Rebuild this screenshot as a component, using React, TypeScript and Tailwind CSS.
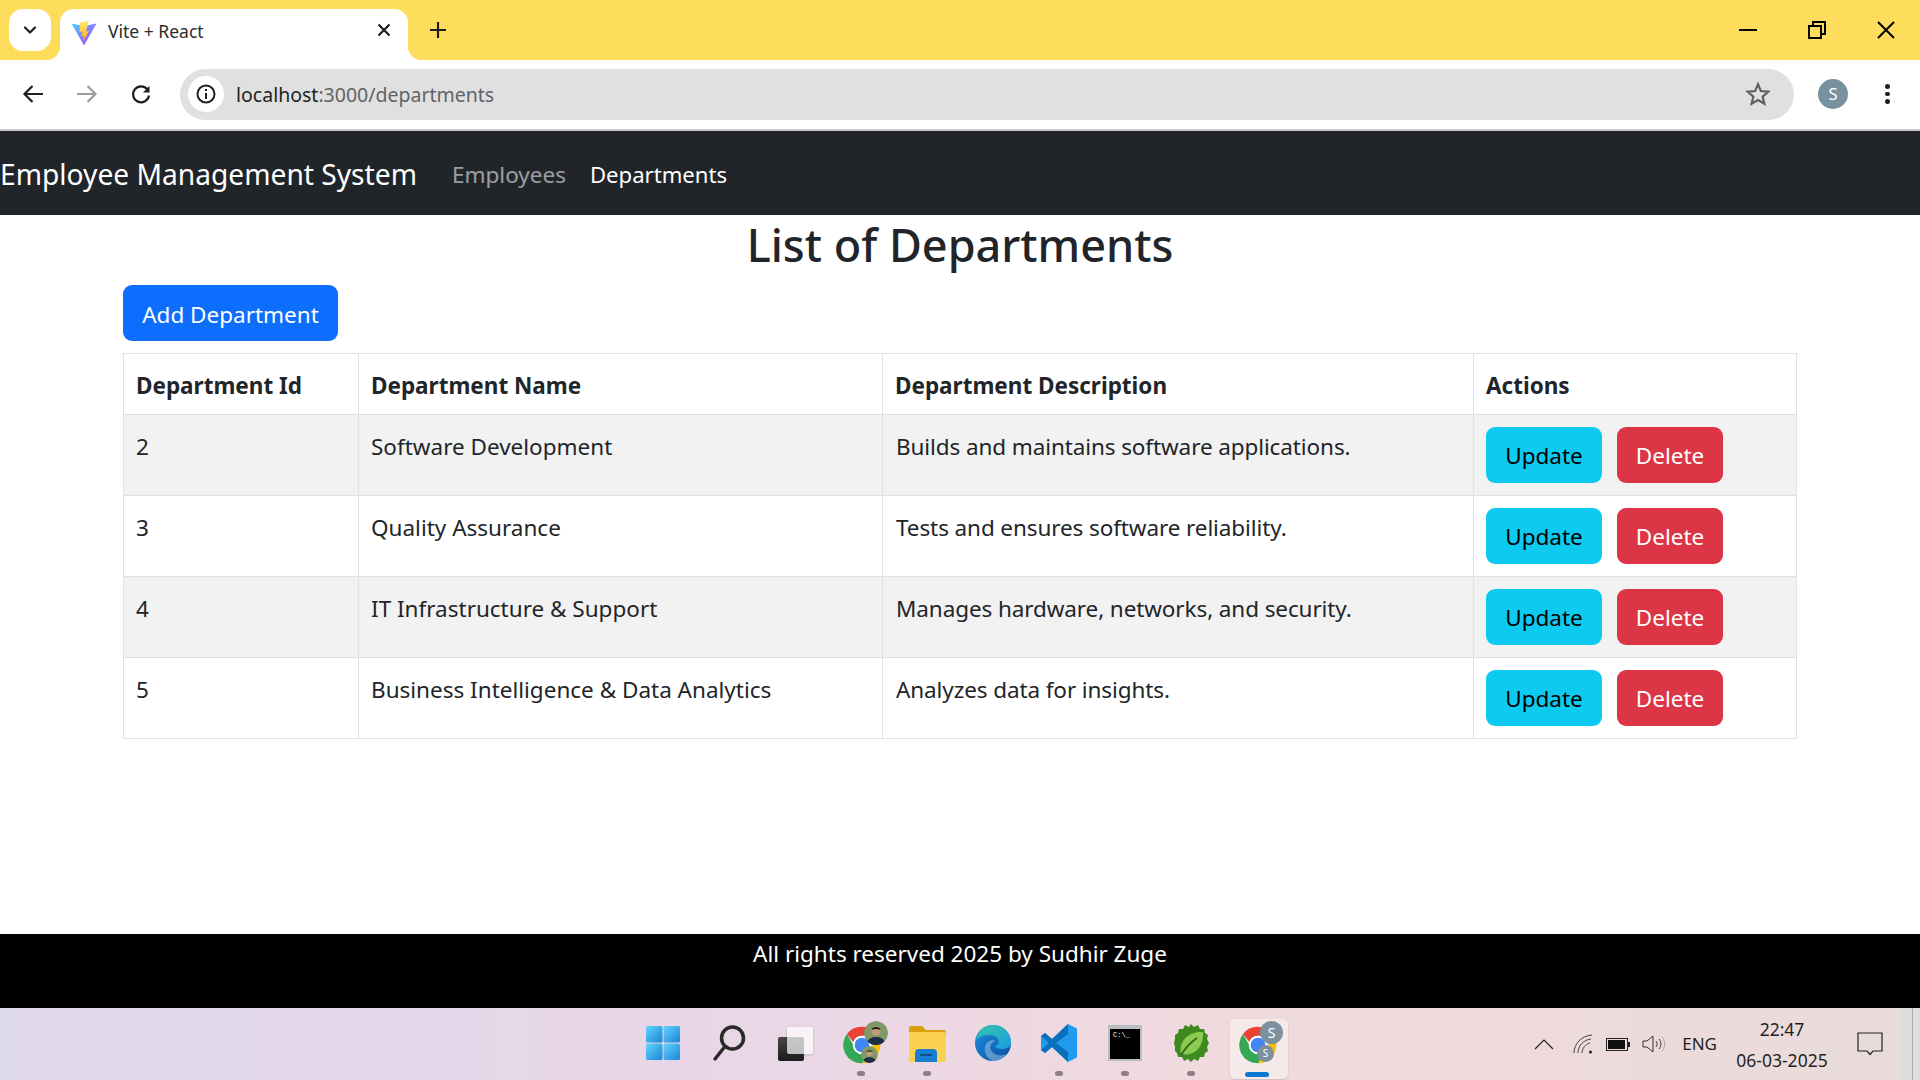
import React from "react";

const F = "font-['Noto_Sans','Open_Sans',sans-serif]";

function ChromeIcon() {
  return (
    <svg width="44" height="44" viewBox="0 0 48 48" className="absolute left-[-1px] top-0">
      <path d="M24 4a20 20 0 0 1 17.3 10H24a10 10 0 0 0-9.4 6.6L7.5 12A20 20 0 0 1 24 4z" fill="#ea4335" />
      <path d="M41.3 14A20 20 0 0 1 24 44l8.6-15a10 10 0 0 0 0-15z" fill="#fbbc04" />
      <path d="M24 44A20 20 0 0 1 7.5 12l8.6 15A10 10 0 0 0 32.6 29z" fill="#34a853" />
      <circle cx="24" cy="24" r="10" fill="#fff" />
      <circle cx="24" cy="24" r="8" fill="#4285f4" />
    </svg>
  );
}

function Person({ s }: { s: number }) {
  return (
    <svg width={s} height={s} viewBox="0 0 24 24" className="block">
      <circle cx="12" cy="12" r="12" fill="#7f9a68" />
      <path d="M3 24c0-6 4-8 9-8s9 2 9 8z" fill="#1c2d45" />
      <circle cx="12" cy="10" r="4.5" fill="#c49a7c" />
      <path d="M7.5 9c0-4 9-4 9 0-2-1.500-7-1.500-9 0z" fill="#1e1a16" />
    </svg>
  );
}

function Slot({ active, dot, children }: { active?: boolean; dot?: boolean; children: React.ReactNode }) {
  return (
    <div className="relative flex h-[72px] w-[66px] items-center justify-center">
      {active && <div className="absolute left-[6px] top-[11px] h-[60px] w-[58px] rounded-[5px] bg-[#f5e9ea] shadow-[0_1px_2px_rgba(0,0,0,0.15)]" />}
      <div className="relative mt-[-3px] flex h-10 w-10 items-center justify-center">{children}</div>
      {dot && <div className="absolute bottom-[4px] left-[29px] h-[5px] w-[8px] rounded-full bg-[#8b8083]" />}
      {active && <div className="absolute bottom-[3px] left-[21px] h-[5px] w-[24px] rounded-full bg-[#0a78d4]" />}
    </div>
  );
}

function Taskbar() {
  return (
    <div className={`flex h-[72px] shrink-0 bg-[linear-gradient(90deg,#dfd9ec_0%,#e8d6e8_35%,#f0dadf_60%,#eddada_85%,#e9dcdc_100%)] ${F}`}>
      <div className="flex-1" />
      <div className="flex">
        <Slot>
          <svg width="36" height="36" viewBox="0 0 36 36">
            <defs>
              <linearGradient id="w" x1="0" y1="0" x2="1" y2="1">
                <stop offset="0" stopColor="#63d4fb" />
                <stop offset="1" stopColor="#1a86d8" />
              </linearGradient>
            </defs>
            <rect x="1" y="1" width="16.500" height="16.500" rx="1.500" fill="url(#w)" />
            <rect x="18.500" y="1" width="16.500" height="16.500" rx="1.500" fill="url(#w)" />
            <rect x="1" y="18.500" width="16.500" height="16.500" rx="1.500" fill="url(#w)" />
            <rect x="18.500" y="18.500" width="16.500" height="16.500" rx="1.500" fill="url(#w)" />
          </svg>
        </Slot>
        <Slot>
          <svg width="36" height="38" viewBox="0 0 36 38" fill="none" stroke="#2a2a2a" strokeLinecap="round">
            <circle cx="21.500" cy="14" r="11" strokeWidth="3.500" />
            <path d="M13.500 23 L4 35" strokeWidth="3.500" />
          </svg>
        </Slot>
        <Slot>
          <div className="relative h-10 w-10">
            <div className="absolute left-[3px] top-[14px] h-[24px] w-[26px] rounded-[2px] bg-[linear-gradient(#484848,#1c1c1c)]" />
            <div className="absolute left-[12px] top-[4px] h-[27px] w-[26px] rounded-[2px] bg-white/70 shadow-[0_1px_3px_rgba(0,0,0,0.2)]" />
          </div>
        </Slot>
        <Slot dot>
          <div className="relative h-10 w-10">
            <ChromeIcon />
            <div className="absolute left-[23px] top-[-2px] h-[24px] w-[24px] overflow-hidden rounded-full"><Person s={24} /></div>
            <div className="absolute left-[20px] top-[23px] h-[17px] w-[17px] overflow-hidden rounded-full"><Person s={17} /></div>
          </div>
        </Slot>
        <Slot dot>
          <svg width="38" height="40" viewBox="0 0 38 40">
            <path d="M1 5a2 2 0 0 1 2-2h11l4 4h18a2 2 0 0 1 2 2v4H1z" fill="#dba10c" />
            <path d="M1 9h35a2 2 0 0 1 2 2v26a2 2 0 0 1-2 2H1z" fill="#fdd150" />
            <path d="M7 39v-9a4 4 0 0 1 4-4h14a4 4 0 0 1 4 4v9z" fill="#1a7dd0" />
            <rect x="12" y="31" width="12" height="2" fill="#0c4f96" />
          </svg>
        </Slot>
        <Slot>
          <svg width="38" height="40" viewBox="0 0 38 40">
            <defs>
              <linearGradient id="e1" x1="0" y1="0" x2="1" y2="1">
                <stop offset="0" stopColor="#35c4a8" />
                <stop offset="1" stopColor="#1b9de2" />
              </linearGradient>
              <linearGradient id="e2" x1="0" y1="0" x2="1" y2="1">
                <stop offset="0" stopColor="#1c8fe0" />
                <stop offset="1" stopColor="#0c4f9e" />
              </linearGradient>
            </defs>
            <circle cx="19" cy="20" r="18" fill="url(#e2)" />
            <path d="M2 17C4 7 11 2 19 2c11 0 18 8 18 17 0 5-4 7-9 7-4 0-6-1-7-3 3-1 5-3 3-7-3-5-15-6-22 1z" fill="url(#e1)" />
            <path d="M19 38c-6-2-9-8-8-14 1-5 6-8 11-6-5 1-7 5-5 9 2 5 9 7 16 4-3 5-8 8-14 7z" fill="#e8f6fc" opacity="0.35" />
          </svg>
        </Slot>
        <Slot dot>
          <svg width="38" height="40" viewBox="0 0 38 40">
            <path d="M28 1l9 4.500v29L28 39 12 24 5 30l-4-3v-14l4-3 7 6z" fill="#1f9cf0" />
            <path d="M28 1L12 16 5 10l-4 3 8 7-8 7 4 3 7-6 16 15V29L16 20 28 11z" fill="#0b6fbd" />
          </svg>
        </Slot>
        <Slot dot>
          <div className="h-[36px] w-[34px] border-x-2 border-b-2 border-t-4 border-[#b9bcc0] bg-black pl-[3px] pt-[2px] font-['Liberation_Mono',monospace] text-[7px] leading-[9px] text-white">C:\_</div>
        </Slot>
        <Slot dot>
          <svg width="36" height="40" viewBox="0 0 36 40">
            <path d="M18 1l3 3 4-2 2 4 4 0 1 4 3 2-1 4 2 4-2 4 1 4-3 2-1 4-4 0-2 4-4-2-3 3-3-3-4 2-2-4-4 0-1-4-2-2 0-4-1-4 1-4 0-4 3-2 1-4 4 0 2-4 4 2z" fill="#3f8a1e" />
            <path d="M8 31C5 18 16 8 30 9c1 14-8 25-22 22z" fill="#8ccb52" />
            <path d="M8 32C13 24 18 19 24 15" stroke="#2f6b12" strokeWidth="1.800" fill="none" />
          </svg>
        </Slot>
        <Slot active>
          <div className="relative h-10 w-10">
            <ChromeIcon />
            <div className="absolute left-[23px] top-[-2px] flex h-[23px] w-[23px] items-center justify-center rounded-full bg-[#7d929e] text-[14px] text-white">S</div>
            <div className="absolute left-[20px] top-[22px] flex h-[17px] w-[17px] items-center justify-center rounded-full bg-[#7d929e] text-[10px] text-white">S</div>
          </div>
        </Slot>
      </div>
      <div className="relative flex flex-1 items-center justify-end text-[#1f1f1f]">
        <div className="flex h-full items-center">
          <svg width="20" height="12" viewBox="0 0 20 12" fill="none" stroke="#222" strokeWidth="1.200" className="mr-[19px]"><path d="M1 11 L10 2 L19 11" /></svg>
          <svg width="20" height="20" viewBox="0 0 20 20" fill="none" stroke="#444" strokeWidth="1" className="mr-[13px]">
            <path d="M1 19C1 10 8 2 19 1M5 19C5 12 10 6 18 5M9 19C9 15 12 10 17 9" />
            <circle cx="17.500" cy="18" r="1.500" fill="#222" stroke="none" />
          </svg>
          <div className="mr-[12px] flex items-center">
            <div className="h-[13px] w-[22px] border border-[#222] p-[1px]"><div className="h-full w-[17px] bg-[#111]" /></div>
            <div className="h-[5px] w-[2px] bg-[#222]" />
          </div>
          <svg width="24" height="20" viewBox="0 0 24 20" fill="none" stroke="#333" strokeWidth="1" className="mr-[16px]">
            <path d="M1 7h4l6-5v16l-6-5H1z" />
            <path d="M14 7c1.500 2 1.500 4 0 6M17 5c2.500 3 2.500 7 0 10" />
            <path d="M20 3c3.500 4 3.500 10 0 14" stroke="#aaa" />
          </svg>
          <span className="mr-[15px] text-[17px]">ENG</span>
          <div className="mr-[25px] flex w-[100px] flex-col items-center gap-[7px] text-[17.500px] leading-[24px]">
            <span>22:47</span>
            <span>06-03-2025</span>
          </div>
          <svg width="26" height="24" viewBox="0 0 26 24" fill="none" stroke="#222" strokeWidth="1.200" className="mr-[17px]">
            <path d="M1 1h24v18H16l-3 3.500L10 19H1z" />
          </svg>
          <div className="h-full w-[20px] bg-[#dedcdc]">
            <div className="ml-[12px] h-full w-[1px] bg-[#aaa]" />
          </div>
        </div>
      </div>
    </div>
  );
}

function BrowserChrome() {
  return (
    <div className={`shrink-0 ${F}`}>
      <div className="relative flex h-[60px] items-start bg-[#ffdd5c]">
        <div className="ml-[9px] mt-[9px] flex h-[42px] w-[42px] items-center justify-center rounded-[14px] bg-white">
          <svg width="14" height="10" viewBox="0 0 14 10" fill="none" stroke="#1f1f1f" strokeWidth="2.200" strokeLinecap="round" strokeLinejoin="round"><path d="M2 2.500 L7 7.500 L12 2.500" /></svg>
        </div>
        <div className="relative ml-[9px] mt-[9px] flex h-[51px] w-[348px] items-center rounded-t-[14px] bg-white pl-[11px]">
          <div className="absolute bottom-0 left-[-14px] h-[14px] w-[14px] bg-[radial-gradient(circle_at_0_0,#ffdd5c_14px,#fff_14.500px)]" />
          <div className="absolute bottom-0 right-[-14px] h-[14px] w-[14px] bg-[radial-gradient(circle_at_100%_0,#ffdd5c_14px,#fff_14.500px)]" />
          <svg width="26" height="26" viewBox="0 0 26 26" className="mb-[3px]">
            <defs>
              <linearGradient id="v1" x1="0" y1="0" x2="1" y2="1">
                <stop offset="0" stopColor="#41d1ff" />
                <stop offset="1" stopColor="#bd34fe" />
              </linearGradient>
              <linearGradient id="v2" x1="0" y1="0" x2="0" y2="1">
                <stop offset="0" stopColor="#ffea83" />
                <stop offset="1" stopColor="#ffa800" />
              </linearGradient>
            </defs>
            <path d="M0.500 3.500 L13 6 L25.500 3.500 L13 25.500 z" fill="url(#v1)" />
            <path d="M17.500 0.500 L9 2.500 L8.500 12 L11.500 11.500 L10.500 16.500 L13 16 L12 21.500 L18 11 L15 11.500 L16 8z" fill="url(#v2)" />
          </svg>
          <span className="mb-[6px] ml-[11px] text-[17.500px] text-[#2c2c2c]">Vite + React</span>
          <svg width="14" height="14" viewBox="0 0 14 14" stroke="#1f1f1f" strokeWidth="2.200" className="absolute left-[317px] top-[14px]"><path d="M1.500 1.500 L12.500 12.500 M12.500 1.500 L1.500 12.500" /></svg>
        </div>
        <svg width="18" height="18" viewBox="0 0 18 18" stroke="#1f1f1f" strokeWidth="2.200" className="ml-[21px] mt-[21px]"><path d="M9 1 V17 M1 9 H17" /></svg>
        <div className="ml-auto mr-[25px] mt-[21px] flex h-[18px] items-center gap-[51px]">
          <div className="h-[2.500px] w-[18px] bg-black" />
          <svg width="18" height="18" viewBox="0 0 18 18" fill="none" stroke="#000" strokeWidth="2"><rect x="1" y="5" width="12" height="12" /><path d="M5 5 V1 H17 V13 H13" /></svg>
          <svg width="18" height="18" viewBox="0 0 18 18" stroke="#000" strokeWidth="2"><path d="M1 1 L17 17 M17 1 L1 17" /></svg>
        </div>
      </div>
      <div className="flex h-[69px] items-center rounded-t-[14px] bg-white pb-[1px]">
        <svg width="22" height="20" viewBox="0 0 22 20" fill="none" stroke="#1f1f1f" strokeWidth="2.200" className="ml-[22px]"><path d="M21 10 H3 M10.500 2 L2.500 10 L10.500 18" /></svg>
        <svg width="22" height="20" viewBox="0 0 22 20" fill="none" stroke="#9c9c9c" strokeWidth="2.200" className="ml-[32px]"><path d="M1 10 H19 M11.500 2 L19.500 10 L11.500 18" /></svg>
        <svg width="22" height="22" viewBox="0 0 22 22" fill="none" stroke="#1f1f1f" strokeWidth="2.200" className="ml-[32px]"><path d="M17.500 6.500A8 8 0 1 0 19 12.500" /><path d="M19.500 3v6.500h-6.500z" fill="#1f1f1f" stroke="none" /></svg>
        <div className="ml-[28px] flex h-[51px] w-[1614px] items-center rounded-full bg-[#e0e0e0] pl-[8px]">
          <div className="flex h-9 w-9 items-center justify-center rounded-full bg-white">
            <svg width="20" height="20" viewBox="0 0 20 20" fill="none" stroke="#1f1f1f" strokeWidth="2"><circle cx="10" cy="10" r="8.500" /><path d="M10 9 V15" /><path d="M10 5 V7" /></svg>
          </div>
          <span className="ml-[12px] pt-[1px] text-[19.500px] text-[#1f1f1f]">localhost<span className="text-[#5f6368]">:3000/departments</span></span>
          <svg width="26" height="26" viewBox="0 0 24 24" fill="none" stroke="#5f5f5f" strokeWidth="2" className="ml-auto mr-[23px]"><path d="M12 3 L14.700 9.300 L21.500 9.900 L16.300 14.400 L17.900 21 L12 17.500 L6.100 21 L7.700 14.400 L2.500 9.900 L9.300 9.300z" /></svg>
        </div>
        <div className="ml-[24px] flex h-[30px] w-[30px] items-center justify-center rounded-full bg-[#78919f] text-[16.500px] text-white">S</div>
        <div className="ml-[37px] flex flex-col gap-[3px]">
          <div className="h-[4.500px] w-[4.500px] rounded-full bg-[#1f1f1f]" />
          <div className="h-[4.500px] w-[4.500px] rounded-full bg-[#1f1f1f]" />
          <div className="h-[4.500px] w-[4.500px] rounded-full bg-[#1f1f1f]" />
        </div>
      </div>
      <div className="h-[2px] bg-[#c8c8c8]" />
    </div>
  );
}

const rows = [
  ["2", "Software Development", "Builds and maintains software applications."],
  ["3", "Quality Assurance", "Tests and ensures software reliability."],
  ["4", "IT Infrastructure & Support", "Manages hardware, networks, and security."],
  ["5", "Business Intelligence & Data Analytics", "Analyzes data for insights."],
];

export default function App() {
  return (
    <div className={`flex h-[1080px] w-[1920px] flex-col overflow-hidden bg-white ${F}`}>
      <BrowserChrome />
      <nav className="flex h-[84px] shrink-0 items-center bg-[#212529] pt-[3px]">
        <span className="text-[28.170px] text-white">Employee Management System</span>
        <span className="ml-[35px] text-[22.500px] text-white/55">Employees</span>
        <span className="ml-[24px] text-[22.100px] text-white">Departments</span>
      </nav>
      <main className="flex-1 text-[#212529]">
        <h2 className="text-center text-[45px] font-medium leading-[60px]">List of Departments</h2>
        <div className="mx-[123px] mt-[10px] w-[1675px]">
          <button className="flex h-[56px] w-[215px] items-center justify-center rounded-[9px] bg-[#0d6efd] pt-[3px] text-[22.500px] text-white">Add Department</button>
          <table className="mt-[12px] w-[1673px] table-fixed border-collapse text-[22.500px]">
            <colgroup>
              <col className="w-[235px]" />
              <col className="w-[524px]" />
              <col className="w-[591px]" />
              <col className="w-[323px]" />
            </colgroup>
            <thead>
              <tr className="h-[61px]">
                {["Department Id", "Department Name", "Department Description", "Actions"].map((h) => (
                  <th key={h} className="border border-[#dee2e6] px-[12px] pt-[4px] text-left font-bold">{h}</th>
                ))}
              </tr>
            </thead>
            <tbody>
              {rows.map((r, i) => (
                <tr key={r[0]} className={`h-[81px] ${i % 2 === 0 ? "bg-[#f2f2f2]" : "bg-white"}`}>
                  {r.map((c, j) => (
                    <td key={j} className={`border border-[#dee2e6] px-[12px] pt-[14px] align-top leading-[36px] ${j === 2 ? "pl-[13px] tracking-[-0.1px]" : ""}`}>{c}</td>
                  ))}
                  <td className="border border-[#dee2e6] px-[12px] align-middle">
                    <div className="flex gap-[15px]">
                      <button className="flex h-[56px] w-[116px] items-center justify-center rounded-[9px] bg-[#0dcaf0] pt-[2px] text-black">Update</button>
                      <button className="flex h-[56px] w-[106px] items-center justify-center rounded-[9px] bg-[#dc3545] pt-[2px] text-white">Delete</button>
                    </div>
                  </td>
                </tr>
              ))}
            </tbody>
          </table>
        </div>
      </main>
      <footer className="h-[74px] shrink-0 bg-black pt-[2px] text-center text-[22.500px] leading-[36px] text-white">All rights reserved 2025 by Sudhir Zuge</footer>
      <Taskbar />
    </div>
  );
}
